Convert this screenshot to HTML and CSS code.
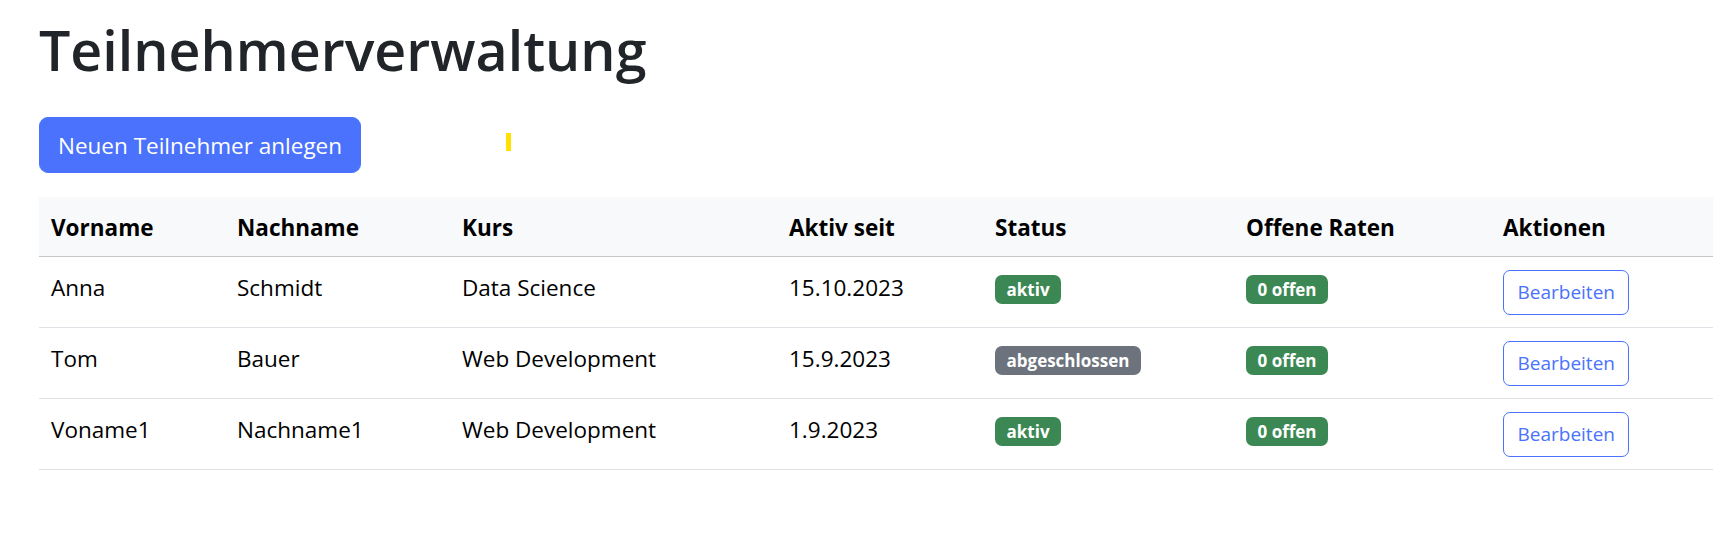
FILE: index.html
```html
<!DOCTYPE html>
<html lang="de">
<head>
<meta charset="utf-8">
<title>Teilnehmerverwaltung</title>
<link rel="stylesheet" href="styles.css">
</head>
<body>
<main class="page">
  <h1 class="title">Teilnehmerverwaltung</h1>
  <div class="toolbar">
    <button class="btn-primary" type="button">Neuen Teilnehmer anlegen</button>
    <span class="marker"></span>
  </div>
  <table class="table">
    <colgroup>
      <col class="c-vorname">
      <col class="c-nachname">
      <col class="c-kurs">
      <col class="c-aktiv">
      <col class="c-status">
      <col class="c-raten">
      <col class="c-aktionen">
    </colgroup>
    <thead>
      <tr>
        <th>Vorname</th>
        <th>Nachname</th>
        <th>Kurs</th>
        <th>Aktiv seit</th>
        <th>Status</th>
        <th>Offene Raten</th>
        <th>Aktionen</th>
      </tr>
    </thead>
    <tbody>
      <tr>
        <td>Anna</td>
        <td>Schmidt</td>
        <td>Data Science</td>
        <td>15.10.2023</td>
        <td><span class="badge badge-success">aktiv</span></td>
        <td><span class="badge badge-success">0 offen</span></td>
        <td><button class="btn-outline" type="button">Bearbeiten</button></td>
      </tr>
      <tr>
        <td>Tom</td>
        <td>Bauer</td>
        <td>Web Development</td>
        <td>15.9.2023</td>
        <td><span class="badge badge-secondary">abgeschlossen</span></td>
        <td><span class="badge badge-success">0 offen</span></td>
        <td><button class="btn-outline" type="button">Bearbeiten</button></td>
      </tr>
      <tr>
        <td>Voname1</td>
        <td>Nachname1</td>
        <td>Web Development</td>
        <td>1.9.2023</td>
        <td><span class="badge badge-success">aktiv</span></td>
        <td><span class="badge badge-success">0 offen</span></td>
        <td><button class="btn-outline" type="button">Bearbeiten</button></td>
      </tr>
    </tbody>
  </table>
</main>
</body>
</html>
```
FILE: styles.css
```css
html, body {
  margin: 0;
  padding: 0;
  background: #ffffff;
}

body {
  font-family: "Open Sans", "Noto Sans", sans-serif;
  color: #212529;
}

.page {
  padding: 16px 22px 0 39px;
}

.title {
  margin: 0;
  font-size: 55.5px;
  font-weight: 600;
  line-height: 67px;
  color: #212529;
}

.toolbar {
  display: flex;
  align-items: flex-start;
  margin-top: 34px;
  margin-bottom: 24px;
}

.btn-primary {
  font-family: inherit;
  font-size: 22.5px;
  font-weight: 400;
  line-height: 36px;
  padding: 10px 18px 8px;
  border: 1px solid #4a72fc;
  background: #4a72fc;
  color: #ffffff;
  border-radius: 9px;
  cursor: pointer;
}

.marker {
  display: block;
  width: 5px;
  height: 18px;
  margin-left: 145px;
  margin-top: 16px;
  background: #ffe000;
}

.table {
  width: 1674px;
  border-collapse: collapse;
  table-layout: fixed;
  color: #000000;
  font-size: 22.5px;
  line-height: 36px;
}

.c-vorname { width: 186px; }
.c-nachname { width: 225px; }
.c-kurs { width: 327px; }
.c-aktiv { width: 206px; }
.c-status { width: 251px; }
.c-raten { width: 257px; }
.c-aktionen { width: 222px; }

.table th {
  text-align: left;
  font-weight: 700;
  background: #f8f9fa;
  padding: 13px 12px 10px;
  border-bottom: 1px solid #c6c7c8;
  vertical-align: top;
}

.table td {
  padding: 13px 12px 12px;
  border-bottom: 1px solid #dee2e6;
  vertical-align: top;
}

.badge {
  display: inline-block;
  padding: 6px 11.5px;
  font-size: 17px;
  font-weight: 700;
  line-height: 1;
  color: #ffffff;
  border-radius: 7px;
  white-space: nowrap;
}

.badge-success {
  background: #3b8854;
}

.badge-secondary {
  background: #6c737c;
}

.btn-outline {
  display: inline-block;
  vertical-align: top;
  font-family: inherit;
  font-size: 19px;
  font-weight: 400;
  line-height: 31px;
  padding: 6px 13.5px;
  border: 1px solid #4a72fc;
  background: #ffffff;
  color: #4a72fc;
  border-radius: 7px;
  cursor: pointer;
}
```
